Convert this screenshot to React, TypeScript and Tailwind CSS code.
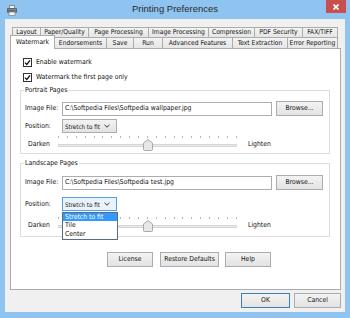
import React from "react";

const FONT = "font-['DejaVu_Sans_Condensed','Liberation_Sans',sans-serif]";

function Tab({ label, cls }: { label: string; cls: string }) {
  return (
    <div
      className={`h-full border-l border-t border-[#acacac] bg-linear-to-b from-[#f3f3f3] to-[#e6e6e6] flex items-center justify-center text-[6.7px] leading-[9px] whitespace-nowrap text-[#111] ${cls}`}
    >
      {label}
    </div>
  );
}

function Checkbox({ label }: { label: string }) {
  return (
    <div className="flex items-center h-[9px] ml-[12px]">
      <div className="w-[9px] h-[9px] border border-[#333] bg-white flex items-center justify-center">
        <svg width="7" height="7" viewBox="0 0 7 7">
          <path d="M1 3.6 L2.8 5.4 L6 1.3" fill="none" stroke="#111" strokeWidth="1.3" />
        </svg>
      </div>
      <span className="ml-[4px] text-[6.8px] leading-[9px] text-[#111] whitespace-nowrap">{label}</span>
    </div>
  );
}

function Btn({ label, cls }: { label: string; cls: string }) {
  return (
    <div
      className={`h-[15px] border bg-linear-to-b from-[#f3f3f3] to-[#e3e3e3] flex items-center justify-center text-[6.8px] leading-[9px] text-[#111] whitespace-nowrap ${cls}`}
    >
      {label}
    </div>
  );
}

function Chevron() {
  return (
    <svg width="6" height="4" viewBox="0 0 6 4" className="ml-auto mr-[6px] shrink-0">
      <path d="M0.5 0.8 L3 3.2 L5.5 0.8" fill="none" stroke="#333" strokeWidth="1" />
    </svg>
  );
}

function Slider() {
  return (
    <div className="relative w-[179px] h-[16px]">
      <div className="flex justify-between w-full h-[2px]">
        {Array.from({ length: 21 }).map((_, i) => (
          <div key={i} className="w-px h-[2px] bg-[#b4b4b4]" />
        ))}
      </div>
      <div className="mt-[6px] h-[3px] border border-[#d6d6d6] bg-[#e7eaea]" />
      <svg className="absolute left-[85px] top-[3px]" width="10" height="12" viewBox="0 0 10 12">
        <path
          d="M5 0.5 L9.5 4 L9.5 10.5 Q9.5 11.5 8.5 11.5 L1.5 11.5 Q0.5 11.5 0.5 10.5 L0.5 4 Z"
          fill="#e7e7e7"
          stroke="#a8a8a8"
          strokeWidth="1"
        />
      </svg>
    </div>
  );
}

function SliderRow({ cls }: { cls: string }) {
  return (
    <div className={`flex items-center h-[16px] ${cls}`}>
      <span className="ml-[3px] w-[30px] text-[6.8px] leading-[9px] text-[#111]">Darken</span>
      <Slider />
      <span className="ml-[11px] text-[6.8px] leading-[9px] text-[#111]">Lighten</span>
    </div>
  );
}

function FileRow({ value, cls }: { value: string; cls: string }) {
  return (
    <div className={`flex items-center ${cls}`}>
      <span className="w-[37px] text-[6.8px] leading-[9px] text-[#111] whitespace-nowrap">Image File:</span>
      <div className="w-[210px] h-[14px] border border-[#abadb3] bg-white flex items-center pl-[2px] text-[6.8px] leading-[9px] text-[#111] whitespace-nowrap overflow-hidden">
        {value}
      </div>
      <Btn label="Browse..." cls="ml-[4px] w-[47px] border-[#acacac]" />
    </div>
  );
}

function PositionRow({ cls, open }: { cls: string; open?: boolean }) {
  return (
    <div className={`flex items-center ${cls}`}>
      <span className="w-[37px] text-[6.8px] leading-[9px] text-[#111]">Position:</span>
      <div
        className={`relative w-[55px] h-[14px] border flex items-center pl-[2px] text-[6.2px] leading-[9px] text-[#111] whitespace-nowrap ${
          open ? "border-[#569de5] bg-[#eaf3fc]" : "border-[#acacac] bg-linear-to-b from-[#f3f3f3] to-[#e3e3e3]"
        }`}
      >
        <span>Stretch to fit</span>
        <Chevron />
        {open && (
          <div className="absolute top-[14px] -left-[1px] w-[56px] border border-[#5a6b84] bg-white z-20 flex flex-col">
            <div className="h-[8px] bg-[#3399ff] text-white pl-[2px] flex items-center text-[6.8px] leading-[8px]">
              Stretch to fit
            </div>
            <div className="h-[9px] pl-[2px] flex items-center text-[6.8px] leading-[9px] text-[#111]">Tile</div>
            <div className="h-[9px] pl-[2px] flex items-center text-[6.8px] leading-[9px] text-[#111]">Center</div>
          </div>
        )}
      </div>
    </div>
  );
}

function PrinterIcon() {
  return (
    <svg width="10" height="11" viewBox="0 0 10 11">
      <rect x="2.5" y="0.5" width="5" height="3" fill="#f4f4f4" stroke="#8a8a8a" />
      <rect x="0" y="3" width="10" height="5" rx="1" fill="#5d6670" />
      <rect x="1" y="4" width="8" height="1" fill="#7f8891" />
      <rect x="2" y="7" width="6" height="3.5" fill="#f4f4f4" stroke="#8a8a8a" strokeWidth="0.8" />
      <rect x="7.5" y="5.5" width="1.5" height="1" fill="#3fa9f5" />
    </svg>
  );
}

export default function App() {
  return (
    <div className={`w-[350px] h-[318px] bg-[#8ec4ef] flex flex-col overflow-hidden ${FONT}`}>
      {/* Title bar */}
      <div className="h-[19px] grid grid-cols-[1fr_auto_1fr]">
        <div className="flex items-start pl-[7px] pt-[5px]">
          <PrinterIcon />
        </div>
        <div className="flex items-center pb-[1px] font-['Liberation_Sans',sans-serif] text-[9.5px] text-[#2b2b2b] whitespace-nowrap">
          Printing Preferences
        </div>
        <div className="flex justify-end items-start pr-[4px]">
          <div className="w-[20px] h-[13px] bg-[#c7504f] flex items-center justify-center">
            <svg width="6" height="6" viewBox="0 0 6 6">
              <path d="M0.5 0.5 L5.5 5.5 M5.5 0.5 L0.5 5.5" stroke="white" strokeWidth="1.6" />
            </svg>
          </div>
        </div>
      </div>

      {/* Client */}
      <div className="mx-[5px] h-[293px] bg-[#f0f0f0] flex flex-col">
        {/* Tabs */}
        <div className="pt-[8px] pl-[7px] flex flex-col">
          <div className="flex h-[10px]">
            <Tab label="Layout" cls="w-[28px]" />
            <Tab label="Paper/Quality" cls="w-[48px]" />
            <Tab label="Page Processing" cls="w-[60px]" />
            <Tab label="Image Processing" cls="w-[60px]" />
            <Tab label="Compression" cls="w-[46px]" />
            <Tab label="PDF Security" cls="w-[48px]" />
            <Tab label="FAX/TIFF" cls="w-[36px] border-r" />
          </div>
          <div className="flex h-[11px] items-start">
            <div className="relative z-10 -mt-[2px] -ml-[2px] -mr-[1px] w-[45px] h-[14px] border-l border-t border-r border-[#acacac] bg-white flex items-start justify-center pt-[2px] text-[6.7px] leading-[9px] text-[#111]">
              Watermark
            </div>
            <Tab label="Endorsements" cls="w-[52px]" />
            <Tab label="Save" cls="w-[27px]" />
            <Tab label="Run" cls="w-[29px]" />
            <Tab label="Advanced Features" cls="w-[70px]" />
            <Tab label="Text Extraction" cls="w-[55px]" />
            <Tab label="Error Reporting" cls="w-[51px] border-r" />
          </div>
        </div>

        {/* Panel */}
        <div className="ml-[5px] w-[331px] h-[242px] border border-[#acacac] bg-white flex flex-col">
          <div className="mt-[9px]">
            <Checkbox label="Enable watermark" />
          </div>
          <div className="mt-[6px]">
            <Checkbox label="Watermark the first page only" />
          </div>

          <fieldset className="mt-[4px] ml-[9px] w-[310px] border border-[#dcdcdc] pl-[4px] pb-[1px] min-w-0">
            <legend className="-ml-[1px] px-[1px] text-[6.8px] leading-[9px] text-[#111]">Portrait Pages</legend>
            <FileRow value={"C:\\Softpedia Files\\Softpedia wallpaper.jpg"} cls="mt-[6px]" />
            <PositionRow cls="mt-[3px]" />
            <SliderRow cls="mt-[3px]" />
          </fieldset>

          <fieldset className="mt-[5px] ml-[9px] w-[310px] border border-[#dcdcdc] pl-[4px] pb-[3px] min-w-0">
            <legend className="-ml-[1px] px-[1px] text-[6.8px] leading-[9px] text-[#111]">Landscape Pages</legend>
            <FileRow value={"C:\\Softpedia Files\\Softpedia test.jpg"} cls="mt-[7px]" />
            <PositionRow cls="mt-[7px]" open />
            <SliderRow cls="mt-[6px]" />
          </fieldset>

          <div className="mt-[15px] ml-[96px] flex">
            <Btn label="License" cls="w-[46px] border-[#acacac]" />
            <Btn label="Restore Defaults" cls="ml-[7px] w-[59px] border-[#acacac]" />
            <Btn label="Help" cls="ml-[6px] w-[46px] border-[#acacac]" />
          </div>
        </div>

        {/* OK / Cancel */}
        <div className="mt-[3px] flex justify-end gap-[4px] pr-[4px]">
          <Btn label="OK" cls="w-[49px] border-[#3c7fb1]" />
          <Btn label="Cancel" cls="w-[47px] border-[#acacac]" />
        </div>
      </div>
    </div>
  );
}
